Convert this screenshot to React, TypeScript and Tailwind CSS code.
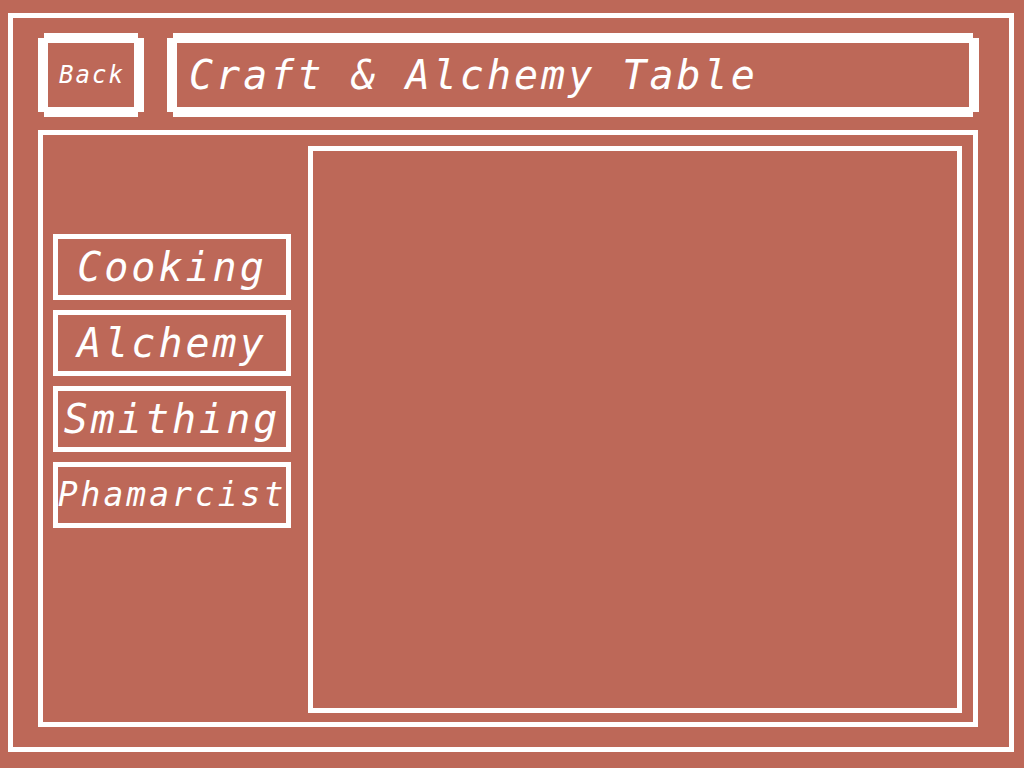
const mono = { fontFamily: '"DejaVu Sans Mono", monospace' };

function PixelBox({ className, children }: { className?: string; children: React.ReactNode }) {
  // outer bars sit 6px in from the sides, giving the stepped corners
  return (
    <div className={`mx-[6px] h-[84px] border-y-[5px] border-white ${className ?? ""}`}>
      <div className="-mx-[6px] flex h-full items-center border-x-[10px] border-y-[5px] border-white">
        {children}
      </div>
    </div>
  );
}

const tabs = [
  { label: "Cooking", size: "text-[40px]" },
  { label: "Alchemy", size: "text-[40px]" },
  { label: "Smithing", size: "text-[40px]" },
  { label: "Phamarcist", size: "text-[33px]" },
];

export default function App() {
  return (
    <div className="h-[768px] w-[1024px] overflow-hidden bg-[#bd6858] pl-[8px] pt-[13px] text-white" style={mono}>
      <div className="flex h-[739px] w-[1006px] flex-col border-[5px] border-white pl-[25px] pr-[30px] pt-[15px]">
        <div className="flex gap-[23px]">
          <PixelBox className="w-[94px]">
            <button className="w-full pl-[2px] text-center text-[24px] italic tracking-[2px]">Back</button>
          </PixelBox>
          <PixelBox className="flex-1">
            <h1 className="pl-[12px] text-[40px] italic tracking-[3px]">Craft &amp; Alchemy Table</h1>
          </PixelBox>
        </div>

        <div className="mt-[13px] flex h-[597px] w-[940px] border-[5px] border-white pb-[9px] pl-[10px] pr-[11px] pt-[11px]">
          <div className="flex w-[238px] flex-col gap-[10px] pt-[88px]">
            {tabs.map((t) => (
              <button
                key={t.label}
                className={`flex h-[66px] items-center justify-center border-[5px] border-white italic tracking-[3px] ${t.size}`}
              >
                {t.label}
              </button>
            ))}
          </div>
          <div className="ml-[17px] flex-1 border-[5px] border-white" />
        </div>
      </div>
    </div>
  );
}
